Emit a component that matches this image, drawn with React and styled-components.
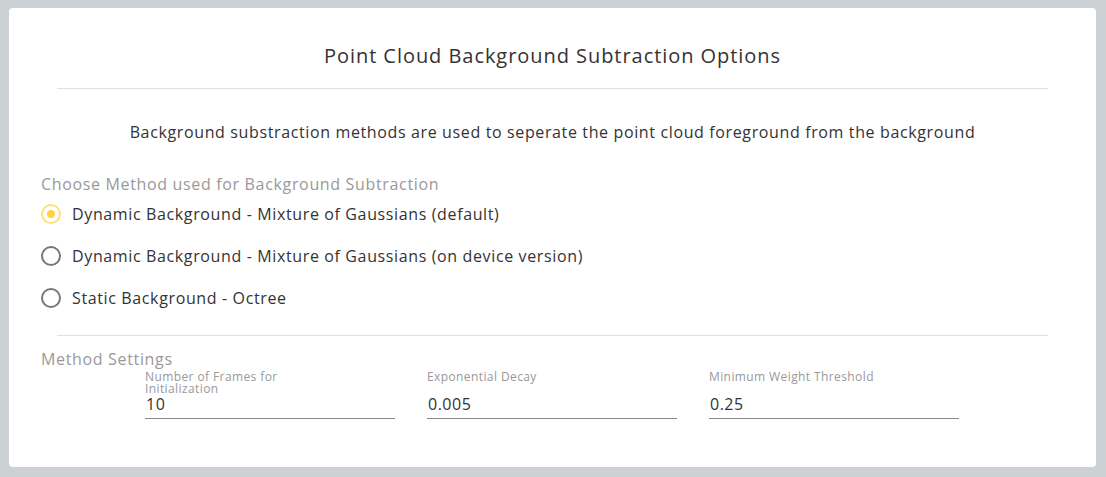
import React, { useState } from 'react';
import styled, { createGlobalStyle } from 'styled-components';

const GlobalStyle = createGlobalStyle`
    html, body {
        margin: 0;
        padding: 0;
        background: #ccd1d4;
        font-family: "Open Sans", "DejaVu Sans", sans-serif;
        color: #333;
    }
`;

const methods = [
    'Dynamic Background - Mixture of Gaussians (default)',
    'Dynamic Background - Mixture of Gaussians (on device version)',
    'Static Background - Octree',
];

const settings = [
    { label: 'Number of Frames for Initialization', value: '10' },
    { label: 'Exponential Decay', value: '0.005' },
    { label: 'Minimum Weight Threshold', value: '0.25' },
];

export default function App() {
    const [method, setMethod] = useState(0);
    const [values, setValues] = useState(settings.map(s => s.value));

    return (
        <>
            <GlobalStyle />
            <Page>
                <Card>
                    <Title>Point Cloud Background Subtraction Options</Title>
                    <Divider />
                    <Description>
                        Background substraction methods are used to seperate the point cloud foreground from the background
                    </Description>
                    <SectionLabel>Choose Method used for Background Subtraction</SectionLabel>
                    <RadioList>
                        {methods.map((m, i) => (
                            <RadioRow key={i} onClick={() => setMethod(i)}>
                                <RadioCircle $checked={method === i} />
                                <span>{m}</span>
                            </RadioRow>
                        ))}
                    </RadioList>
                    <Divider $bottom />
                    <SectionLabel $tight>Method Settings</SectionLabel>
                    <FieldRow>
                        {settings.map((s, i) => (
                            <Field key={i}>
                                <FieldLabel>{s.label}</FieldLabel>
                                <FieldInput
                                    value={values[i]}
                                    onChange={e => setValues(values.map((v, j) => j === i ? e.target.value : v))}
                                />
                            </Field>
                        ))}
                    </FieldRow>
                </Card>
            </Page>
        </>
    );
}

const Page = styled.div`
    padding: 8px 10px 10px 9px;
`;

const Card = styled.div`
    background: #fff;
    border-radius: 4px;
    padding: 32px 32px 48px 32px;
    min-height: 379px;
`;

const Title = styled.div`
    text-align: center;
    font-size: 20px;
    line-height: 32px;
    letter-spacing: 0.95px;
    color: #333;
`;

const Divider = styled.hr`
    border: none;
    border-top: 1px solid #e0e0e0;
    margin: ${p => p.$bottom ? '25px 16px 11px' : '16px 16px 0'};
`;

const Description = styled.div`
    text-align: center;
    font-size: 16px;
    line-height: 24px;
    margin-top: 31px;
    letter-spacing: 0.63px;
    color: #333;
`;

const SectionLabel = styled.div`
    font-size: 16px;
    line-height: 24px;
    color: #999;
    margin-top: ${p => p.$tight ? '0' : '28px'};
    letter-spacing: 0.66px;
`;

const RadioList = styled.div`
    display: flex;
    flex-direction: column;
    gap: 18px;
    margin-top: 6px;
`;

const RadioRow = styled.label`
    display: flex;
    align-items: center;
    gap: 11px;
    font-size: 16px;
    line-height: 24px;
    cursor: pointer;
    color: #333;
    letter-spacing: 0.63px;
`;

const RadioCircle = styled.span`
    width: 16px;
    height: 16px;
    border-radius: 50%;
    border: 2px solid ${p => p.$checked ? '#fde27a' : '#777'};
    display: flex;
    align-items: center;
    justify-content: center;
    flex-shrink: 0;

    &::after {
        content: '';
        width: 8px;
        height: 8px;
        border-radius: 50%;
        background: ${p => p.$checked ? '#fdd442' : 'transparent'};
    }
`;

const FieldRow = styled.div`
    display: flex;
    gap: 32px;
    padding-left: 104px;
`;

const Field = styled.div`
    width: 250px;
    height: 48px;
    display: flex;
    flex-direction: column;
    justify-content: space-between;
`;

const FieldLabel = styled.div`
    font-size: 12px;
    line-height: 12px;
    color: #999;
    max-width: 190px;
    letter-spacing: 0.4px;
`;

const FieldInput = styled.input`
    border: none;
    border-bottom: 1px solid #888;
    outline: none;
    font-family: inherit;
    font-size: 16px;
    letter-spacing: 0.5px;
    color: #333;
    height: 24px;
    padding: 0 0 6px 1px;
    margin: 0;
    background: transparent;
    width: 250px;
    box-sizing: border-box;
    flex-shrink: 0;
`;
